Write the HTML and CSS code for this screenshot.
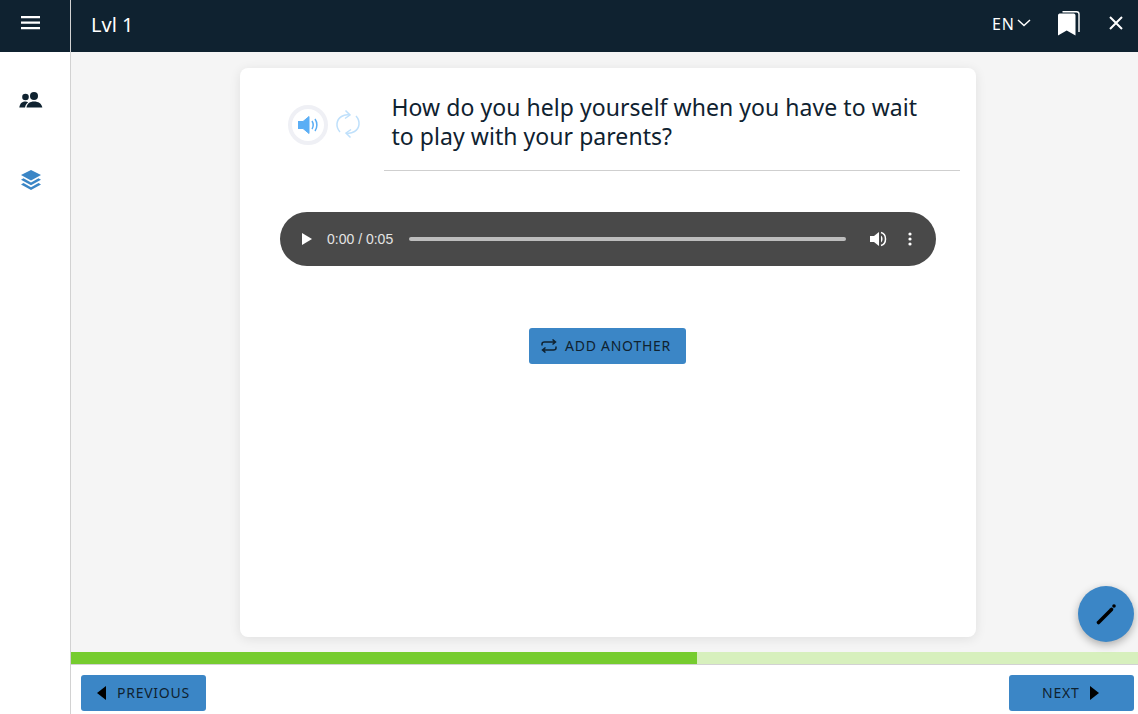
FILE: index.html
```html
<!DOCTYPE html>
<html lang="en">
<head>
<meta charset="utf-8">
<title>Lvl 1</title>
<link rel="stylesheet" href="styles.css">
</head>
<body>
<header class="topbar">
  <div class="menu-cell">
    <svg class="icon-menu" viewBox="0 0 19 14" width="19" height="14"><path d="M0 1.200h19M0 6.700h19M0 12.200h19" stroke="#fff" stroke-width="2.200" fill="none"/></svg>
  </div>
  <div class="title">Lvl 1</div>
  <div class="top-actions">
    <span class="lang">EN</span>
    <svg class="chev" viewBox="0 0 14 8" width="14" height="8"><path d="M1 1l6 5.500L13 1" stroke="#fff" stroke-width="1.500" fill="none"/></svg>
    <svg class="bookmark" viewBox="0 0 22 25" width="22" height="25"><path d="M0 4.500C0 3 1 2.500 2.500 2.500H15C16.500 2.500 17.500 3 17.500 4.500V24.500L8.700 19.500 0 24.500Z" fill="#fff"/><path d="M4.500 0.700H18.500C20.200 0.700 21 1.500 21 3V21" stroke="#fff" stroke-width="1.400" fill="none"/></svg>
    <svg class="close" viewBox="0 0 14 14" width="14" height="14"><path d="M1 1l12 12M13 1L1 13" stroke="#fff" stroke-width="2" fill="none"/></svg>
  </div>
</header>
<div class="body-row">
  <aside class="sidebar">
    <svg class="side-icon" viewBox="0 0 24 16" width="24" height="16"><circle cx="6.500" cy="5" r="3.300" fill="#0f2230"/><circle cx="15" cy="4" r="4" fill="#0f2230"/><path d="M0.300 15.500C1 11 3.500 9.500 6.500 9.500C7.500 9.500 8.500 9.800 9.200 10.200C7.500 11.500 6.500 13 6 15.500Z" fill="#0f2230"/><path d="M7.500 15.500C8 11.500 11 9.500 15 9.500C19.500 9.500 22.500 11.500 23.300 15.500Z" fill="#0f2230"/></svg>
    <svg class="side-icon layers" viewBox="0 0 20 20" width="20" height="20"><path d="M10 0L20 5 10 10.500 0 5Z" fill="#3b86c6"/><path d="M2.500 8.200L10 12.500 17.500 8.200 20 9.800 10 15.300 0 9.800Z" fill="#3b86c6"/><path d="M2.500 13L10 17.200 17.500 13 20 14.500 10 20 0 14.500Z" fill="#3b86c6"/></svg>
  </aside>
  <main class="main">
    <div class="stage">
      <section class="card">
        <div class="question-row">
          <div class="audio-icons">
            <span class="speaker-ring">
              <svg viewBox="0 0 22 18" width="22" height="18"><path d="M0 5.500H5L11 0.500V17.500L5 12.500H0Z" fill="#5aaef5" stroke="#5aaef5" stroke-linejoin="round"/><path d="M14 5C15.500 7.500 15.500 10.500 14 13M17 3C19.500 6.500 19.500 11.500 17 15" stroke="#5aaef5" stroke-width="1.500" fill="none"/></svg>
            </span>
            <svg class="sync" viewBox="0 0 26 30" width="26" height="30"><path d="M5 23C0.500 18 1 11 6.500 7.500C9 6 11.500 5.500 14 6" stroke="#bfe0fb" stroke-width="1.500" fill="none"/><path d="M10.500 1.500L15 6 10 9.500" stroke="#bfe0fb" stroke-width="1.500" fill="none"/><path d="M21 7C25.500 12 25 19 19.500 22.500C17 24 14.500 24.500 12 24" stroke="#bfe0fb" stroke-width="1.500" fill="none"/><path d="M15.500 28.500L11 24 16 20.500" stroke="#bfe0fb" stroke-width="1.500" fill="none"/></svg>
          </div>
          <h1 class="question">How do you help yourself when you have to wait to play with your parents?</h1>
        </div>
        <div class="player">
          <svg class="play" viewBox="0 0 10 12" width="10" height="12"><path d="M0 0L10 6 0 12Z" fill="#fff"/></svg>
          <span class="time">0:00 / 0:05</span>
          <span class="track"></span>
          <svg class="vol" viewBox="0 0 18 16" width="18" height="16"><path d="M0 5H4L9 1V15L4 11H0Z" fill="#fff"/><path d="M11 4.500C13 6 13 10 11 11.500V4.500Z" fill="#fff"/><path d="M11 1.500C17 3 17 13 11 14.500" stroke="#fff" stroke-width="1.500" fill="none"/></svg>
          <svg class="more" viewBox="0 0 4 14" width="4" height="14"><circle cx="2" cy="2" r="1.600" fill="#fff"/><circle cx="2" cy="7" r="1.600" fill="#fff"/><circle cx="2" cy="12" r="1.600" fill="#fff"/></svg>
        </div>
        <div class="add-row">
          <button class="btn btn-add" type="button">
            <svg viewBox="0 0 16 14" width="16" height="14"><path d="M1 6.500V5C1 3.500 2 3 3.500 3H14M11.500 0.500L14.500 3 11.500 5.500M15 7.500V9C15 10.500 14 11 12.500 11H2M4.500 8.500L1.500 11 4.500 13.500" stroke="#0f2230" stroke-width="1.500" fill="none"/></svg>
            <span class="btn-label">ADD ANOTHER</span>
          </button>
        </div>
      </section>
      <button class="fab" type="button" aria-label="Edit">
        <svg viewBox="0 0 24 24" width="24" height="24"><path d="M4.500 20.500L17.500 7.500" stroke="#000" stroke-width="3.600" stroke-linecap="round" fill="none"/><circle cx="20" cy="4" r="1.800" fill="#000"/></svg>
      </button>
    </div>
    <div class="progress"><div class="progress-fill"></div></div>
    <footer class="footer">
      <button class="btn btn-nav btn-prev" type="button">
        <svg viewBox="0 0 9 14" width="9" height="14"><path d="M9 0V14L0 7Z" fill="#000"/></svg>
        <span class="btn-label">PREVIOUS</span>
      </button>
      <button class="btn btn-nav btn-next" type="button">
        <span class="btn-label">NEXT</span>
        <svg viewBox="0 0 9 14" width="9" height="14"><path d="M0 0V14L9 7Z" fill="#000"/></svg>
      </button>
    </footer>
  </main>
</div>
</body>
</html>
```
FILE: styles.css
```css
* { box-sizing: border-box; }
html, body { margin: 0; height: 100%; }
body {
  width: 1138px;
  height: 714px;
  overflow: hidden;
  display: flex;
  flex-direction: column;
  font-family: "Noto Sans", sans-serif;
  color: #0f2230;
  background: #fff;
}
.topbar {
  height: 52px;
  flex: none;
  display: flex;
  background: #0f2230;
  color: #fff;
}
.menu-cell {
  width: 71px;
  flex: none;
  border-right: 1px solid #d2d2d2;
  padding: 16px 0 0 21px;
}
.icon-menu { display: block; }
.title {
  margin-left: 20px;
  font-size: 20px;
  line-height: 50px;
}
.top-actions {
  margin-left: auto;
  display: flex;
  align-items: center;
  height: 46px;
  padding-right: 15px;
}
.lang { font-size: 16px; letter-spacing: 1px; margin-top: 2px; }
.chev { margin-left: 2px; }
.bookmark { margin-left: 27px; }
.close { margin-left: 29px; }
.body-row { flex: 1; display: flex; min-height: 0; }
.sidebar {
  width: 71px;
  flex: none;
  border-right: 1px solid #d2d2d2;
  display: flex;
  flex-direction: column;
  align-items: flex-start;
  padding: 40px 0 0 19px;
  gap: 62px;
}
.side-icon { display: block; }
.layers { margin-left: 2px; }
.main { flex: 1; min-width: 0; display: flex; flex-direction: column; }
.stage {
  position: relative;
  height: 600px;
  flex: none;
  background: #f5f5f5;
  padding: 16px 0 0 169px;
}
.card {
  width: 736px;
  height: 569px;
  background: #fff;
  border-radius: 8px;
  box-shadow: 0 2px 12px rgba(0, 0, 0, 0.09);
  padding: 24px 16px 0 40px;
}
.question-row { display: flex; }
.audio-icons {
  width: 104px;
  flex: none;
  display: flex;
  align-items: flex-start;
  padding: 13px 0 0 8px;
}
.speaker-ring {
  width: 40px;
  height: 40px;
  flex: none;
  border: 4px solid #eff0f5;
  border-radius: 50%;
  display: flex;
  align-items: center;
  justify-content: center;
  padding-left: 1px;
}
.sync { margin: 4px 0 0 7px; }
.question {
  margin: 0;
  flex: 1;
  height: 79px;
  padding: 1px 32px 0 7.5px;
  border-bottom: 1px solid #cfcfcf;
  font-size: 23px;
  line-height: 29px;
  font-weight: 400;
  letter-spacing: 0.05px;
  color: #0f2230;
}
.player {
  width: 656px;
  height: 54px;
  margin-top: 41px;
  border-radius: 27px;
  background: #494949;
  display: flex;
  align-items: center;
  padding: 0 24px 0 22px;
  font-family: "Liberation Sans", sans-serif;
}
.time { margin-left: 15px; font-size: 14px; color: #e4e4e4; white-space: nowrap; }
.track {
  flex: 1;
  height: 4px;
  margin: 0 23px 0 16px;
  background: #bdbdbd;
  border-radius: 2px;
}
.vol { flex: none; margin-left: 1px; }
.more { flex: none; margin-left: 20px; }
.add-row { width: 655px; display: flex; justify-content: center; margin-top: 62px; }
.btn {
  display: inline-flex;
  align-items: center;
  border: none;
  border-radius: 3px;
  background: #3b86c6;
  color: #0f2230;
  font-family: "Noto Sans", sans-serif;
  font-size: 14px;
  letter-spacing: 0.75px;
  padding: 0;
}
.btn-label { position: relative; top: -1px; }
.btn-add { width: 157px; height: 36px; padding-left: 12px; gap: 8px; }
.fab {
  position: absolute;
  left: 1007px;
  top: 534px;
  width: 56px;
  height: 56px;
  border: none;
  border-radius: 50%;
  background: #3b86c6;
  box-shadow: 0 3px 8px rgba(0, 0, 0, 0.3);
  display: flex;
  align-items: center;
  justify-content: center;
  padding: 0;
}
.progress {
  height: 13px;
  flex: none;
  background: #d7f0bd;
  border-bottom: 1px solid #d2d2d2;
}
.progress-fill { width: 626px; height: 12px; background: #76cc2f; }
.footer {
  flex: 1;
  display: flex;
  justify-content: space-between;
  padding: 10px 4px 0 10px;
}
.btn-nav { width: 125px; height: 36px; }
.btn-prev { padding-left: 16px; gap: 11px; }
.btn-next { padding-left: 33px; gap: 11px; }
```
